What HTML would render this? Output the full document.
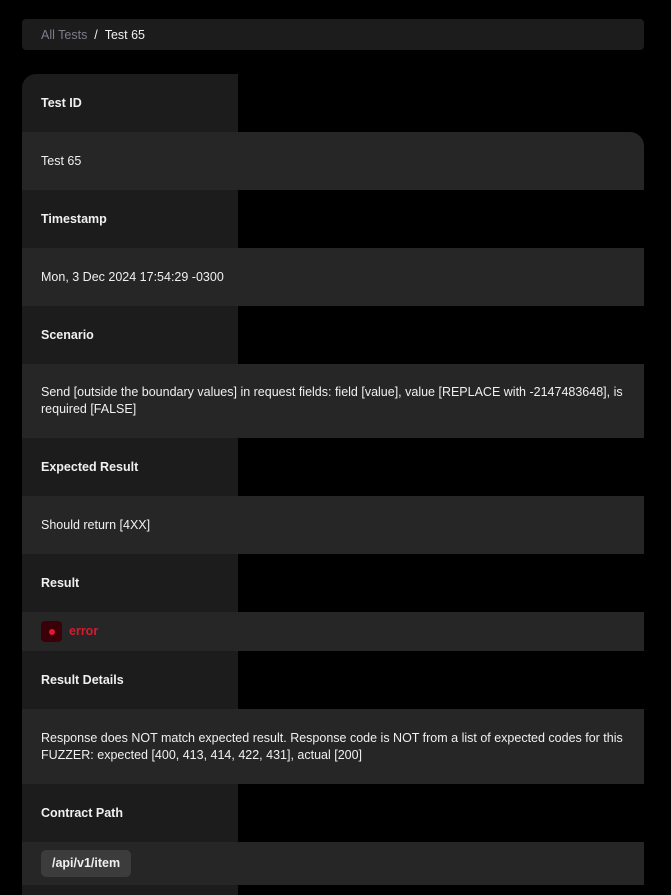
<!DOCTYPE html>
<html><head><style>
*{margin:0;padding:0;box-sizing:border-box}
body{width:671px;height:891px;background:#000;font-family:"Liberation Sans",sans-serif;font-size:12.5px;color:#f0f0f0;position:relative;overflow:hidden}
.b{position:absolute;left:22px;display:flex;align-items:center;padding-left:19px}
.th{width:216px;background:#1c1c1c;font-weight:bold}
.td{width:622px;background:#262626;padding-right:20px;line-height:17px}
</style></head><body>
<div class="b" style="top:19px;height:31px;width:622px;background:#1c1c1c;border-radius:4px"><span style="color:#7d7d8a">All Tests</span>&nbsp;&nbsp;/&nbsp;&nbsp;Test 65</div>
<div class="b th" style="top:74px;height:58px;border-top-left-radius:14px">Test ID</div>
<div class="b td" style="top:132px;height:58px;border-top-right-radius:14px">Test 65</div>
<div class="b th" style="top:190px;height:58px">Timestamp</div>
<div class="b td" style="top:248px;height:58px">Mon, 3 Dec 2024 17:54:29 -0300</div>
<div class="b th" style="top:306px;height:58px">Scenario</div>
<div class="b td" style="top:364px;height:74px">Send [outside the boundary values] in request fields: field [value], value [REPLACE with -2147483648], is required [FALSE]</div>
<div class="b th" style="top:438px;height:58px">Expected Result</div>
<div class="b td" style="top:496px;height:58px">Should return [4XX]</div>
<div class="b th" style="top:554px;height:58px">Result</div>
<div class="b td" style="top:612px;height:39px"><span style="display:inline-flex;width:21px;height:21px;background:#3a0008;border-radius:4px;align-items:center;justify-content:center;margin-right:7px"><span style="width:6px;height:6px;border-radius:50%;background:#e0192e"></span></span><b style="color:#d81a2e">error</b></div>
<div class="b th" style="top:651px;height:58px">Result Details</div>
<div class="b td" style="top:709px;height:75px">Response does NOT match expected result. Response code is NOT from a list of expected codes for this FUZZER: expected [400, 413, 414, 422, 431], actual [200]</div>
<div class="b th" style="top:784px;height:58px">Contract Path</div>
<div class="b td" style="top:842px;height:43px"><span style="background:#3c3c3c;border-radius:5px;padding:5px 11px;font-weight:bold">/api/v1/item</span></div>
<div class="b th" style="top:885px;height:10px"></div>
</body></html>
